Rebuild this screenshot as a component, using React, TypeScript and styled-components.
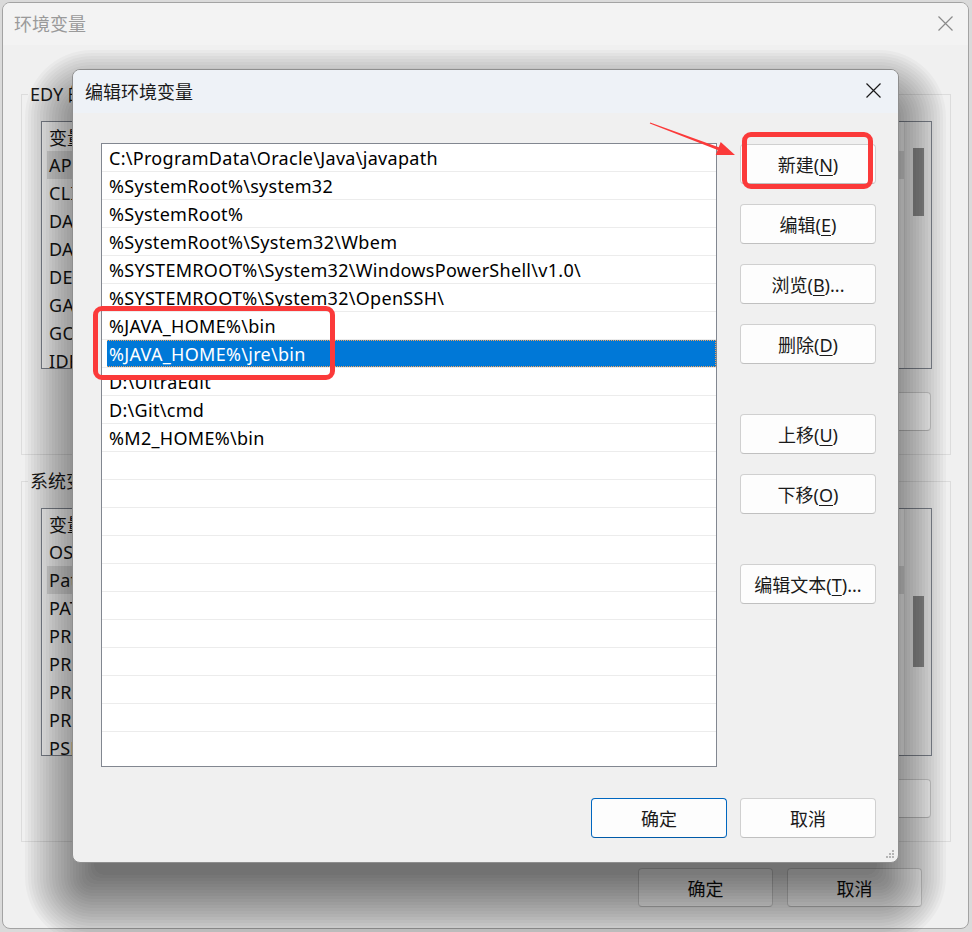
import React from "react";
import styled, { createGlobalStyle } from "styled-components";

const FONT = `"Noto Sans", "Noto Sans CJK SC", sans-serif`;

const GlobalStyle = createGlobalStyle`
  html, body { margin: 0; padding: 0; }
  body { background: #d8d8d8; font-family: ${FONT}; color: #1a1a1a; }
  * { box-sizing: border-box; }
`;

const Desktop = styled.div`
  position: relative;
  width: 972px;
  height: 932px;
  overflow: hidden;
  padding: 2px 3px 3px 2px;
  background: #dadada;
`;

/* ---------- outer window (环境变量) ---------- */
const OuterWindow = styled.div`
  width: 967px;
  height: 927px;
  display: flex;
  flex-direction: column;
  background: #f0f0f0;
  border: 1px solid #a3a3a3;
  border-radius: 8px;
  overflow: hidden;
`;

const OuterTitleBar = styled.div`
  flex: none;
  height: 42px;
  display: flex;
  align-items: center;
  justify-content: space-between;
  padding: 0 15px 2px 11px;
  background: #f3f3f3;
`;

const OuterTitle = styled.span`
  font-size: 18px;
  color: #9a9a9a;
`;

const OuterBody = styled.div`
  flex: 1;
  display: flex;
  flex-direction: column;
  padding: 38px 17px 0 18px;
`;

const Group = styled.fieldset`
  margin: 0;
  padding: 16px 18px 23px 19px;
  border: 1px solid #dcdcdc;
  min-width: 0;
  display: flex;
  flex-direction: column;
  & + & {
    margin-top: 15px;
  }
`;

const GroupLegend = styled.legend`
  margin-left: -13px;
  padding: 0 2px;
  font-size: 18px;
  line-height: 22px;
`;

const VarList = styled.div`
  height: 248px;
  display: flex;
  border: 1px solid #828790;
  background: #fff;
  overflow: hidden;
`;

const VarColumn = styled.div`
  flex: 1;
  min-width: 0;
  display: flex;
  flex-direction: column;
  border-right: 1px solid #e4e4e4;
`;

const VarHeader = styled.div`
  height: 29px;
  flex: none;
  display: flex;
  align-items: center;
  padding-left: 7px;
  font-size: 18px;
`;

const VarRow = styled.div<{ $selected?: boolean }>`
  height: 28px;
  flex: none;
  margin-left: 5px;
  padding-left: 2px;
  display: flex;
  align-items: center;
  font-size: 18px;
  letter-spacing: 0.3px;
  white-space: nowrap;
  background: ${(p) => (p.$selected ? "#e3e3e3" : "transparent")};
`;

const ScrollTrack = styled.div<{ $offset: number }>`
  width: 26px;
  flex: none;
  display: flex;
  justify-content: center;
  align-items: flex-start;
  padding-top: ${(p) => p.$offset}px;
  background: #f0f0f0;
`;

const ScrollThumb = styled.div<{ $length: number }>`
  width: 11px;
  height: ${(p) => p.$length}px;
  background: #8f8f8f;
`;

const GroupButtons = styled.div`
  margin-top: 23px;
  display: flex;
  justify-content: flex-end;
  gap: 14px;
  padding-right: 1px;
`;

const OuterFooter = styled.div`
  margin-top: 26px;
  display: flex;
  justify-content: flex-end;
  gap: 14px;
  padding-right: 29px;
`;

/* ---------- buttons ---------- */
const Button = styled.button<{ $primary?: boolean; $w?: number; $h?: number }>`
  width: ${(p) => p.$w ?? 136}px;
  height: ${(p) => p.$h ?? 40}px;
  padding: 0;
  font-family: ${FONT};
  font-size: 18px;
  color: #1a1a1a;
  background: #fdfdfd;
  border: 1px solid ${(p) => (p.$primary ? "#0067c0" : "#d0d0d0")};
  border-bottom-color: ${(p) => (p.$primary ? "#005aa8" : "#c0c0c0")};
  border-radius: 4px;
  display: flex;
  align-items: center;
  justify-content: center;
  & u {
    text-decoration-thickness: 1px;
    text-underline-offset: 3px;
  }
`;

/* ---------- shadow cast by the modal: stacked translucent layers ---------- */
const ShadowLayer = styled.div<{ $e: number }>`
  position: absolute;
  z-index: 1;
  pointer-events: none;
  left: ${(p) => 82 - p.$e}px;
  top: ${(p) => 107 - p.$e}px;
  width: ${(p) => 807 + 2 * p.$e}px;
  height: ${(p) => 780 + 2 * p.$e}px;
  border-radius: ${(p) => 10 + Math.max(p.$e, 0)}px;
  background: rgba(0, 0, 0, 0.026);
`;

/* ---------- inner dialog (编辑环境变量) ---------- */
const Dialog = styled.div`
  position: absolute;
  z-index: 2;
  left: 72px;
  top: 69px;
  width: 827px;
  height: 794px;
  display: flex;
  flex-direction: column;
  background: #f0f0f0;
  border: 1px solid #8e8e8e;
  border-radius: 8px;
  overflow: hidden;
`;

const DialogTitleBar = styled.div`
  flex: none;
  height: 43px;
  display: flex;
  align-items: center;
  justify-content: space-between;
  padding: 0 17px 2px 12px;
  background: #eef2f7;
`;

const DialogTitle = styled.span`
  font-size: 18px;
  color: #1a1a1a;
`;

const DialogBody = styled.div`
  flex: 1;
  display: grid;
  grid-template-columns: 616px 136px;
  grid-template-rows: 624px auto;
  column-gap: 23px;
  row-gap: 31px;
  padding: 30px 22px 0 28px;
`;

const PathList = styled.div`
  border: 1px solid #828790;
  background: #fff;
  overflow: hidden;
`;

const PathRow = styled.div`
  height: 28px;
  display: flex;
  padding-left: 5px;
  border-bottom: 1px solid #ececec;
`;

const PathCell = styled.div<{ $selected?: boolean }>`
  flex: 1;
  display: flex;
  align-items: center;
  padding-left: 2px;
  font-size: 18px;
  letter-spacing: 0.3px;
  white-space: nowrap;
  color: ${(p) => (p.$selected ? "#fff" : "#000")};
  background: ${(p) => (p.$selected ? "#0078d7" : "transparent")};
  border: 1px ${(p) => (p.$selected ? "dotted #f5a35a" : "solid transparent")};
  border-left-width: 0;
`;

const ButtonColumn = styled.div`
  display: flex;
  flex-direction: column;
  gap: 20px;
  padding-top: 1px;
`;

const ColumnSpacer = styled.div`
  height: 10px;
`;

const DialogFooter = styled.div`
  grid-column: 1 / -1;
  display: flex;
  justify-content: flex-end;
  gap: 13px;
`;

const Grip = styled.svg`
  position: absolute;
  right: 3px;
  bottom: 3px;
`;

/* ---------- annotations ---------- */
const Highlight = styled.div<{ $x: number; $y: number; $w: number; $h: number }>`
  position: absolute;
  z-index: 3;
  left: ${(p) => p.$x}px;
  top: ${(p) => p.$y}px;
  width: ${(p) => p.$w}px;
  height: ${(p) => p.$h}px;
  border: 5px solid #fb3a3a;
  border-radius: 9px;
  pointer-events: none;
`;

const ArrowLayer = styled.svg`
  position: absolute;
  z-index: 3;
  left: 0;
  top: 0;
  pointer-events: none;
`;

const CloseIcon = ({ color, size = 15 }: { color: string; size?: number }) => (
  <svg width={size} height={size} viewBox="0 0 15 15">
    <path d="M0.5 0.5 L14.5 14.5 M14.5 0.5 L0.5 14.5" stroke={color} strokeWidth="1.2" fill="none" />
  </svg>
);

const paths = [
  "C:\\ProgramData\\Oracle\\Java\\javapath",
  "%SystemRoot%\\system32",
  "%SystemRoot%",
  "%SystemRoot%\\System32\\Wbem",
  "%SYSTEMROOT%\\System32\\WindowsPowerShell\\v1.0\\",
  "%SYSTEMROOT%\\System32\\OpenSSH\\",
  "%JAVA_HOME%\\bin",
  "%JAVA_HOME%\\jre\\bin",
  "D:\\UltraEdit",
  "D:\\Git\\cmd",
  "%M2_HOME%\\bin",
];
const TOTAL_ROWS = 21;
const SELECTED = 7;

const userVars = [
  "APPCODE_VM_OPTIONS",
  "CLION_VM_OPTIONS",
  "DATAGRIP_VM_OPTIONS",
  "DATASPELL_VM_OPTIONS",
  "DEVECOSTUDIO_VM_OPTIONS",
  "GATEWAY_VM_OPTIONS",
  "GOLAND_VM_OPTIONS",
  "IDEA_VM_OPTIONS",
];
const systemVars = [
  "OS",
  "Path",
  "PATHEXT",
  "PROCESSOR_ARCHITECTURE",
  "PROCESSOR_IDENTIFIER",
  "PROCESSOR_LEVEL",
  "PROCESSOR_REVISION",
  "PSModulePath",
];

const shadowSteps = Array.from({ length: 24 }, (_, i) => -12 + 3 * i);

const Mn = ({ label, k, tail = "" }: { label: string; k: string; tail?: string }) => (
  <span>
    {label}(<u>{k}</u>){tail}
  </span>
);

export default function App() {
  const rows = Array.from({ length: TOTAL_ROWS }, (_, i) => paths[i] ?? "");
  return (
    <>
      <GlobalStyle />
      <Desktop>
        <OuterWindow>
          <OuterTitleBar>
            <OuterTitle>环境变量</OuterTitle>
            <CloseIcon color="#8a8a8a" />
          </OuterTitleBar>
          <OuterBody>
            <Group>
              <GroupLegend>EDY 的用户变量(U)</GroupLegend>
              <VarList>
                <VarColumn>
                  <VarHeader>变量</VarHeader>
                  {userVars.map((v, i) => (
                    <VarRow key={v} $selected={i === 0}>
                      {v}
                    </VarRow>
                  ))}
                </VarColumn>
                <ScrollTrack $offset={26}>
                  <ScrollThumb $length={68} />
                </ScrollTrack>
              </VarList>
              <GroupButtons>
                <Button $w={135} $h={39}>
                  <Mn label="删除" k="D" />
                </Button>
              </GroupButtons>
            </Group>
            <Group>
              <GroupLegend>系统变量(S)</GroupLegend>
              <VarList>
                <VarColumn>
                  <VarHeader>变量</VarHeader>
                  {systemVars.map((v, i) => (
                    <VarRow key={v} $selected={i === 1}>
                      {v}
                    </VarRow>
                  ))}
                </VarColumn>
                <ScrollTrack $offset={87}>
                  <ScrollThumb $length={71} />
                </ScrollTrack>
              </VarList>
              <GroupButtons>
                <Button $w={135} $h={39}>
                  <Mn label="删除" k="L" />
                </Button>
              </GroupButtons>
            </Group>
            <OuterFooter>
              <Button $w={135} $h={39}>确定</Button>
              <Button $w={135} $h={39}>取消</Button>
            </OuterFooter>
          </OuterBody>
        </OuterWindow>

        {shadowSteps.map((e) => (
          <ShadowLayer key={e} $e={e} />
        ))}

        <Dialog>
          <DialogTitleBar>
            <DialogTitle>编辑环境变量</DialogTitle>
            <CloseIcon color="#1a1a1a" />
          </DialogTitleBar>
          <DialogBody>
            <PathList>
              {rows.map((p, i) => (
                <PathRow key={i}>
                  <PathCell $selected={i === SELECTED}>{p}</PathCell>
                </PathRow>
              ))}
            </PathList>
            <ButtonColumn>
              <Button><Mn label="新建" k="N" /></Button>
              <Button><Mn label="编辑" k="E" /></Button>
              <Button><Mn label="浏览" k="B" tail="..." /></Button>
              <Button><Mn label="删除" k="D" /></Button>
              <ColumnSpacer />
              <Button><Mn label="上移" k="U" /></Button>
              <Button><Mn label="下移" k="O" /></Button>
              <ColumnSpacer />
              <Button><Mn label="编辑文本" k="T" tail="..." /></Button>
            </ButtonColumn>
            <DialogFooter>
              <Button $primary>确定</Button>
              <Button>取消</Button>
            </DialogFooter>
          </DialogBody>
          <Grip width="10" height="10" viewBox="0 0 10 10">
            <g fill="#b5b5b5">
              <rect x="7" y="1" width="2" height="2" />
              <rect x="4" y="4" width="2" height="2" />
              <rect x="7" y="4" width="2" height="2" />
              <rect x="1" y="7" width="2" height="2" />
              <rect x="4" y="7" width="2" height="2" />
              <rect x="7" y="7" width="2" height="2" />
            </g>
          </Grip>
        </Dialog>

        <Highlight $x={742} $y={132} $w={131} $h={57} />
        <Highlight $x={93} $y={306} $w={242} $h={74} />
        <ArrowLayer width="972" height="932" viewBox="0 0 972 932">
          <polygon
            fill="#fb3a3a"
            points="650.2,122.5 718.7,147.2 720.7,142.1 735,155 715.7,155.1 717.7,150 649.8,123.5"
          />
        </ArrowLayer>
      </Desktop>
    </>
  );
}
